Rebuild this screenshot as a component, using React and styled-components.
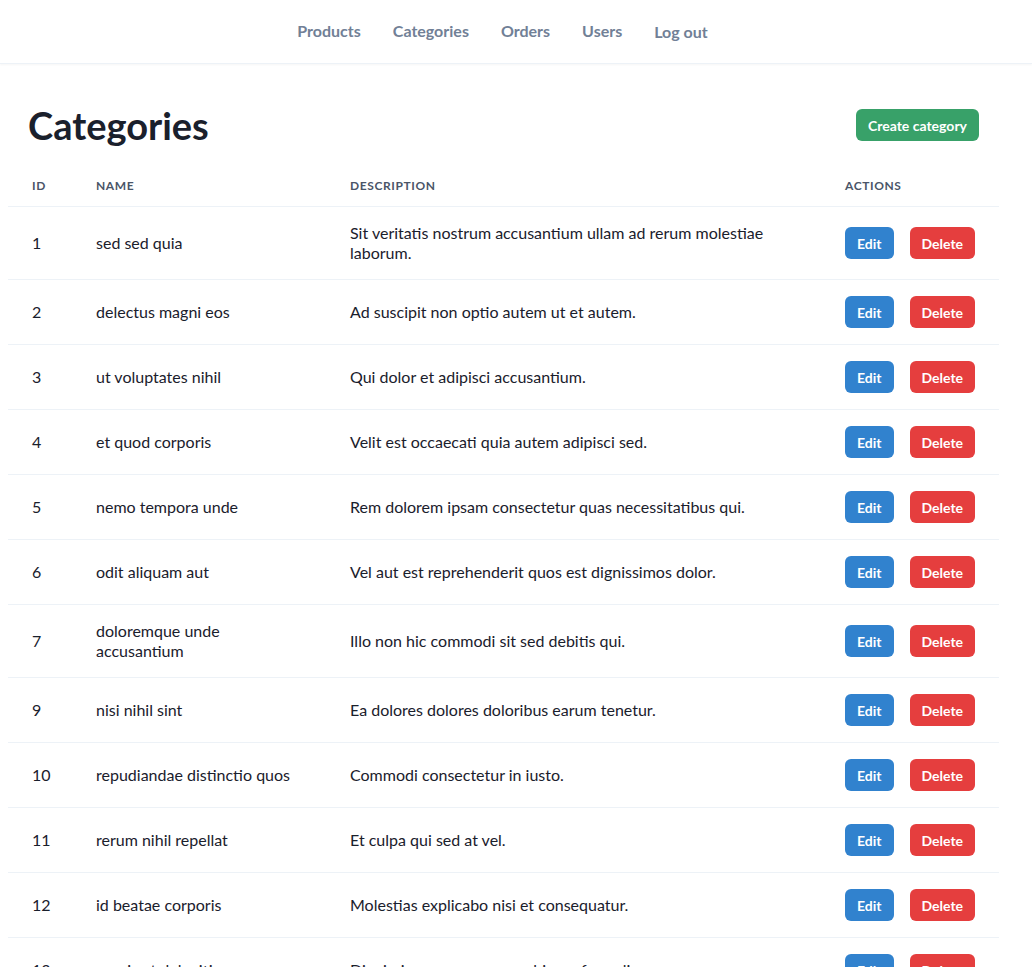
import styled, { createGlobalStyle } from "styled-components";

const GlobalStyle = createGlobalStyle`
  body {
    margin: 0;
    background: #fff;
    font-family: Lato, "Noto Sans", sans-serif;
    color: #1a202c;
  }
`;

const NavBar = styled.nav`
  height: 63px;
  border-bottom: 1px solid #edf2f7;
  box-shadow: 0 1px 2px rgba(0, 0, 0, 0.04);
`;

const NavInner = styled.div`
  width: 1005px;
  height: 100%;
  box-sizing: border-box;
  padding-bottom: 2px;
  display: flex;
  align-items: center;
  justify-content: center;
  gap: 32px;
`;

const NavLink = styled.a`
  color: #718096;
  font-size: 16px;
  font-weight: 700;
  text-decoration: none;
  margin-top: ${(p) => (p.$low ? "2px" : "0")};
  cursor: pointer;
`;

const Main = styled.main`
  width: 991px;
  margin-left: 8px;
  padding-top: 20px;
`;

const HeaderRow = styled.div`
  display: flex;
  align-items: center;
  justify-content: space-between;
  padding: 20px;
`;

const Title = styled.h1`
  margin: 0;
  font-size: 38px;
  line-height: 42px;
  font-weight: 700;
  color: #1a202c;
`;

const Button = styled.button`
  height: 32px;
  padding: 0 12px;
  border: none;
  border-radius: 6px;
  font-family: inherit;
  font-size: 14px;
  font-weight: 700;
  color: #fff;
  background: ${(p) => p.$bg};
  cursor: pointer;
`;

const Table = styled.table`
  width: 100%;
  border-collapse: collapse;
  table-layout: fixed;
`;

const Th = styled.th`
  text-align: left;
  padding: 12px 24px;
  font-size: 12px;
  line-height: 16px;
  font-weight: 700;
  letter-spacing: 0.05em;
  text-transform: uppercase;
  color: #4a5568;
  border-bottom: 1px solid #edf2f7;
`;

const Td = styled.td`
  padding: 16px 24px;
  font-size: 16px;
  line-height: 20px;
  vertical-align: middle;
  border-bottom: 1px solid #edf2f7;
`;

const Actions = styled.div`
  display: flex;
  gap: 16px;
`;

const categories = [
  { id: 1, name: "sed sed quia", description: "Sit veritatis nostrum accusantium ullam ad rerum molestiae laborum." },
  { id: 2, name: "delectus magni eos", description: "Ad suscipit non optio autem ut et autem." },
  { id: 3, name: "ut voluptates nihil", description: "Qui dolor et adipisci accusantium." },
  { id: 4, name: "et quod corporis", description: "Velit est occaecati quia autem adipisci sed." },
  { id: 5, name: "nemo tempora unde", description: "Rem dolorem ipsam consectetur quas necessitatibus qui." },
  { id: 6, name: "odit aliquam aut", description: "Vel aut est reprehenderit quos est dignissimos dolor." },
  { id: 7, name: "doloremque unde accusantium", description: "Illo non hic commodi sit sed debitis qui." },
  { id: 9, name: "nisi nihil sint", description: "Ea dolores dolores doloribus earum tenetur." },
  { id: 10, name: "repudiandae distinctio quos", description: "Commodi consectetur in iusto." },
  { id: 11, name: "rerum nihil repellat", description: "Et culpa qui sed at vel." },
  { id: 12, name: "id beatae corporis", description: "Molestias explicabo nisi et consequatur." },
  { id: 13, name: "omnis et deleniti", description: "Dignissimos quos ea quas hic perferendis." },
];

function App() {
  return (
    <>
      <GlobalStyle />
      <NavBar>
        <NavInner>
          <NavLink>Products</NavLink>
          <NavLink>Categories</NavLink>
          <NavLink>Orders</NavLink>
          <NavLink>Users</NavLink>
          <NavLink $low>Log out</NavLink>
        </NavInner>
      </NavBar>
      <Main>
        <HeaderRow>
          <Title>Categories</Title>
          <Button $bg="#38a169">Create category</Button>
        </HeaderRow>
        <Table>
          <colgroup>
            <col style={{ width: 64 }} />
            <col style={{ width: 254 }} />
            <col style={{ width: 495 }} />
            <col style={{ width: 178 }} />
          </colgroup>
          <thead>
            <tr>
              <Th>ID</Th>
              <Th>Name</Th>
              <Th>Description</Th>
              <Th>Actions</Th>
            </tr>
          </thead>
          <tbody>
            {categories.map((category) => (
              <tr key={category.id}>
                <Td>{category.id}</Td>
                <Td>{category.name}</Td>
                <Td>{category.description}</Td>
                <Td>
                  <Actions>
                    <Button $bg="#3182ce">Edit</Button>
                    <Button $bg="#e53e3e">Delete</Button>
                  </Actions>
                </Td>
              </tr>
            ))}
          </tbody>
        </Table>
      </Main>
    </>
  );
}

export default App;
